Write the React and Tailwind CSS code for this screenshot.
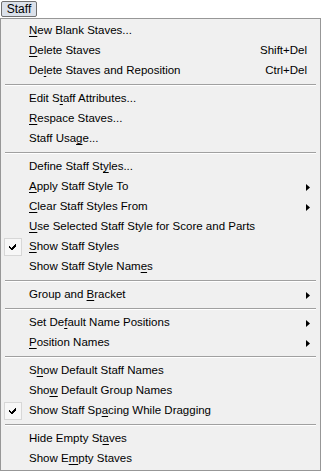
import React from 'react';

// label, index of the mnemonic letter, shortcut, submenu arrow, checked
const groups = [
  [
    { label: 'New Blank Staves...', u: 0 },
    { label: 'Delete Staves', u: 0, key: 'Shift+Del' },
    { label: 'Delete Staves and Reposition', u: 2, key: 'Ctrl+Del' },
  ],
  [
    { label: 'Edit Staff Attributes...', u: 6 },
    { label: 'Respace Staves...', u: 0 },
    { label: 'Staff Usage...', u: 9 },
  ],
  [
    { label: 'Define Staff Styles...', u: 15 },
    { label: 'Apply Staff Style To', u: 0, sub: true },
    { label: 'Clear Staff Styles From', u: 0, sub: true },
    { label: 'Use Selected Staff Style for Score and Parts', u: 0 },
    { label: 'Show Staff Styles', u: 0, checked: true },
    { label: 'Show Staff Style Names', u: 20 },
  ],
  [{ label: 'Group and Bracket', u: 10, sub: true }],
  [
    { label: 'Set Default Name Positions', u: 6, sub: true },
    { label: 'Position Names', u: 0, sub: true },
  ],
  [
    { label: 'Show Default Staff Names', u: 1 },
    { label: 'Show Default Group Names', u: 3 },
    { label: 'Show Staff Spacing While Dragging', u: 13, checked: true },
  ],
  [
    { label: 'Hide Empty Staves', u: 13 },
    { label: 'Show Empty Staves', u: 6 },
  ],
];

function Label({ text, u }) {
  return (
    <span>
      {text.slice(0, u)}
      <span className="underline underline-offset-[2px]">{text[u]}</span>
      {text.slice(u + 1)}
    </span>
  );
}

function CheckBox() {
  return (
    <div className="absolute left-[3px] top-[1px] w-[18px] h-[18px] border border-[#d7d7d7] bg-[#f7f7f7] flex items-center justify-center">
      <svg width="8" height="8" viewBox="0 0 8 8">
        <path d="M0 3h1v1h1v1h1v-1h1v-1h1v-1h1v-1h1v3h-1v1h-1v1h-1v1h-2v-1h-1v-1h-1z" fill="#000" />
      </svg>
    </div>
  );
}

function Arrow() {
  return (
    <svg width="4" height="7" viewBox="0 0 4 7" className="mr-[10px]">
      <path d="M0 0L4 3.5L0 7Z" fill="#000" />
    </svg>
  );
}

function MenuItem({ item }) {
  return (
    <div className="relative h-[20px] flex items-center pl-[28px]">
      {item.checked && <CheckBox />}
      <div className="flex-1">
        <Label text={item.label} u={item.u} />
      </div>
      {item.key && <span className="mr-[13px]">{item.key}</span>}
      {item.sub && <Arrow />}
    </div>
  );
}

function Separator() {
  return (
    <div className="h-[8px] pt-[3px] pl-[4px] pr-[4px]">
      <div className="h-px bg-[#a0a0a0]" />
      <div className="h-px bg-white" />
    </div>
  );
}

export default function App() {
  return (
    <div
      className="w-[322px] h-[472px] bg-white text-black text-[11.5px] leading-none"
      style={{ fontFamily: '"Liberation Sans", Arial, sans-serif' }}
    >
      <div className="h-[18px] pt-px pl-px">
        <div className="w-[36px] h-[16px] rounded-[2px] border border-[#707070] bg-[#dbe1ea] flex items-center justify-center text-[12px]">
          Staff
        </div>
      </div>
      <div className="w-[321px] h-[453px] border border-[#979797] bg-[#f0f0f0] pt-[2px]">
        {groups.map((g, gi) => (
          <React.Fragment key={gi}>
            {gi > 0 && <Separator />}
            {g.map((item) => (
              <MenuItem key={item.label} item={item} />
            ))}
          </React.Fragment>
        ))}
      </div>
    </div>
  );
}
